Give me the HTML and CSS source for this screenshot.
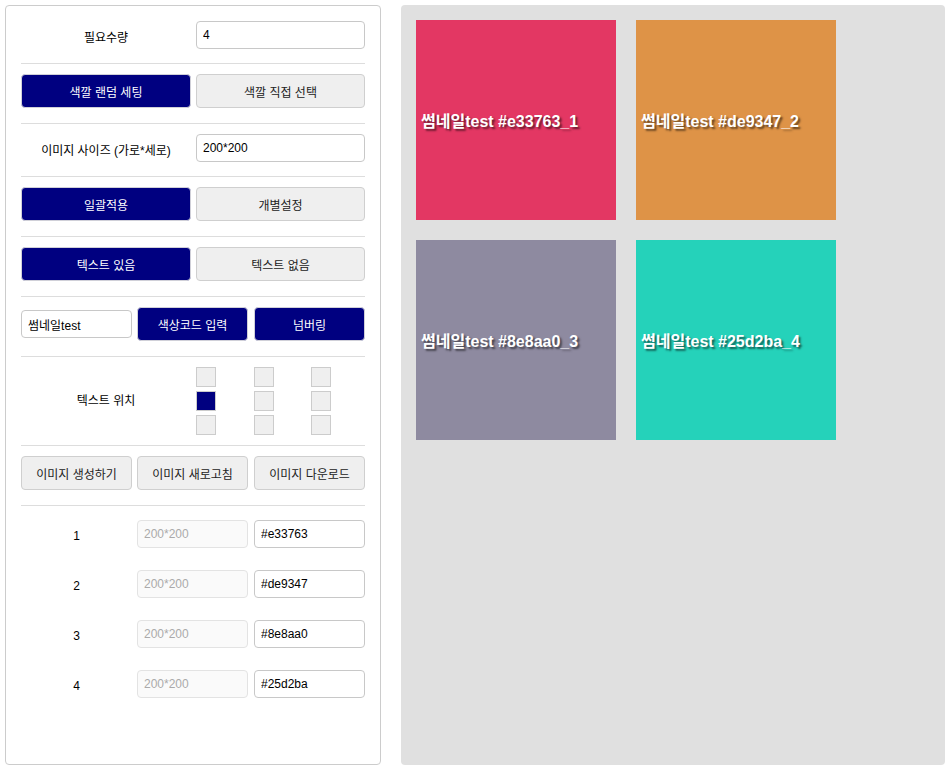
FILE: index.html
```html
<!DOCTYPE html>
<html lang="ko">
<head>
<meta charset="utf-8">
<title>썸네일 생성기</title>
<link rel="stylesheet" href="styles.css">
</head>
<body>
<div class="app">
  <div class="panel">
    <div class="sec sec-first row2">
      <label class="lbl">필요수량</label>
      <input class="inp" type="text" value="4">
    </div>
    <div class="sec row2">
      <button class="btn on">색깔 랜덤 세팅</button>
      <button class="btn">색깔 직접 선택</button>
    </div>
    <div class="sec sec-inp row2">
      <label class="lbl">이미지 사이즈 (가로*세로)</label>
      <input class="inp" type="text" value="200*200">
    </div>
    <div class="sec row2">
      <button class="btn on">일괄적용</button>
      <button class="btn">개별설정</button>
    </div>
    <div class="sec row2">
      <button class="btn on">텍스트 있음</button>
      <button class="btn">텍스트 없음</button>
    </div>
    <div class="sec row3">
      <input class="inp" type="text" value="썸네일test">
      <button class="btn on">색상코드 입력</button>
      <button class="btn on">넘버링</button>
    </div>
    <div class="sec sec-pos row2">
      <label class="lbl lbl-mid">텍스트 위치</label>
      <div class="pos-grid">
        <span class="sq"></span><span class="sq"></span><span class="sq"></span>
        <span class="sq sq-on"></span><span class="sq"></span><span class="sq"></span>
        <span class="sq"></span><span class="sq"></span><span class="sq"></span>
      </div>
    </div>
    <div class="sec row3">
      <button class="btn">이미지 생성하기</button>
      <button class="btn">이미지 새로고침</button>
      <button class="btn">이미지 다운로드</button>
    </div>
    <div class="list">
      <div class="row3 item">
        <span class="num">1</span>
        <input class="inp inp-dis" type="text" placeholder="200*200" disabled>
        <input class="inp" type="text" value="#e33763">
      </div>
      <div class="row3 item">
        <span class="num">2</span>
        <input class="inp inp-dis" type="text" placeholder="200*200" disabled>
        <input class="inp" type="text" value="#de9347">
      </div>
      <div class="row3 item">
        <span class="num">3</span>
        <input class="inp inp-dis" type="text" placeholder="200*200" disabled>
        <input class="inp" type="text" value="#8e8aa0">
      </div>
      <div class="row3 item">
        <span class="num">4</span>
        <input class="inp inp-dis" type="text" placeholder="200*200" disabled>
        <input class="inp" type="text" value="#25d2ba">
      </div>
    </div>
  </div>
  <div class="canvas">
    <div class="thumb t1"><span>썸네일test #e33763_1</span></div>
    <div class="thumb t2"><span>썸네일test #de9347_2</span></div>
    <div class="thumb t3"><span>썸네일test #8e8aa0_3</span></div>
    <div class="thumb t4"><span>썸네일test #25d2ba_4</span></div>
  </div>
</div>
</body>
</html>
```
FILE: styles.css
```css
* { box-sizing: border-box; }
html, body { margin: 0; background: #fff; }
body {
  padding: 5px;
  font-family: "Liberation Sans", "Noto Sans CJK KR", Arial, sans-serif;
  font-size: 12px;
  color: #000;
}
.app { display: flex; gap: 20px; height: 760px; }
.panel {
  width: 376px;
  height: 760px;
  border: 1px solid #cccccc;
  border-radius: 4px;
  padding: 15px;
}
.sec {
  padding: 10px 0 15px;
  border-bottom: 1px solid #dddddd;
}
.sec-first { padding-top: 0; padding-bottom: 14px; }
.sec-inp { padding-bottom: 14px; }
.sec-pos { padding-bottom: 10px; }
.row2 {
  display: grid;
  grid-template-columns: 170px 169px;
  column-gap: 5px;
  align-items: center;
}
.row3 {
  display: grid;
  grid-template-columns: 111px 111px 111px;
  column-gap: 5px;
  align-items: center;
}
.row3 > :last-child { margin-left: 1px; }
.lbl { text-align: center; padding-top: 6px; line-height: 16px; }
.lbl-mid { padding-top: 0; }
.inp {
  height: 28px;
  width: 100%;
  border: 1px solid #c8c8c8;
  border-radius: 4px;
  padding: 0 6px;
  font-family: inherit;
  font-size: 12px;
  color: #000;
  background: #fff;
  outline: none;
}
.inp-dis {
  background: #fafafa;
  border-color: #e3e3e3;
  color: #aaa;
}
.inp-dis::placeholder { color: #aaaaaa; }
.btn {
  height: 34px;
  width: 100%;
  border: 1px solid #cfcfcf;
  border-radius: 4px;
  background: #efefef;
  color: #222;
  font-family: inherit;
  font-size: 12px;
  padding: 0;
}
.btn.on {
  background: #000080;
  color: #fff;
  border-color: #d0d0d8;
}
.pos-grid {
  display: grid;
  grid-template-columns: repeat(3, 20px);
  column-gap: 37.5px;
  row-gap: 4px;
}
.sq {
  width: 20px;
  height: 20px;
  background: #efefef;
  border: 1px solid #cccccc;
}
.sq-on { background: #000080; }
.list { padding-top: 14px; display: flex; flex-direction: column; gap: 22px; }
.num { text-align: center; padding-top: 4px; }
.canvas {
  width: 544px;
  height: 760px;
  background: #e0e0e0;
  border-radius: 4px;
  padding: 15px;
  display: flex;
  flex-wrap: wrap;
  align-content: flex-start;
  gap: 20px;
}
.thumb {
  width: 200px;
  height: 200px;
  display: flex;
  align-items: center;
  padding-left: 5px;
  padding-bottom: 1px;
  color: #fff;
  font-weight: bold;
  font-size: 16px;
  text-shadow: 2px 2px 2px rgba(0, 0, 0, 0.55);
  white-space: nowrap;
}
.t1 { background: #e33763; }
.t2 { background: #de9347; }
.t3 { background: #8e8aa0; }
.t4 { background: #25d2ba; }
```
